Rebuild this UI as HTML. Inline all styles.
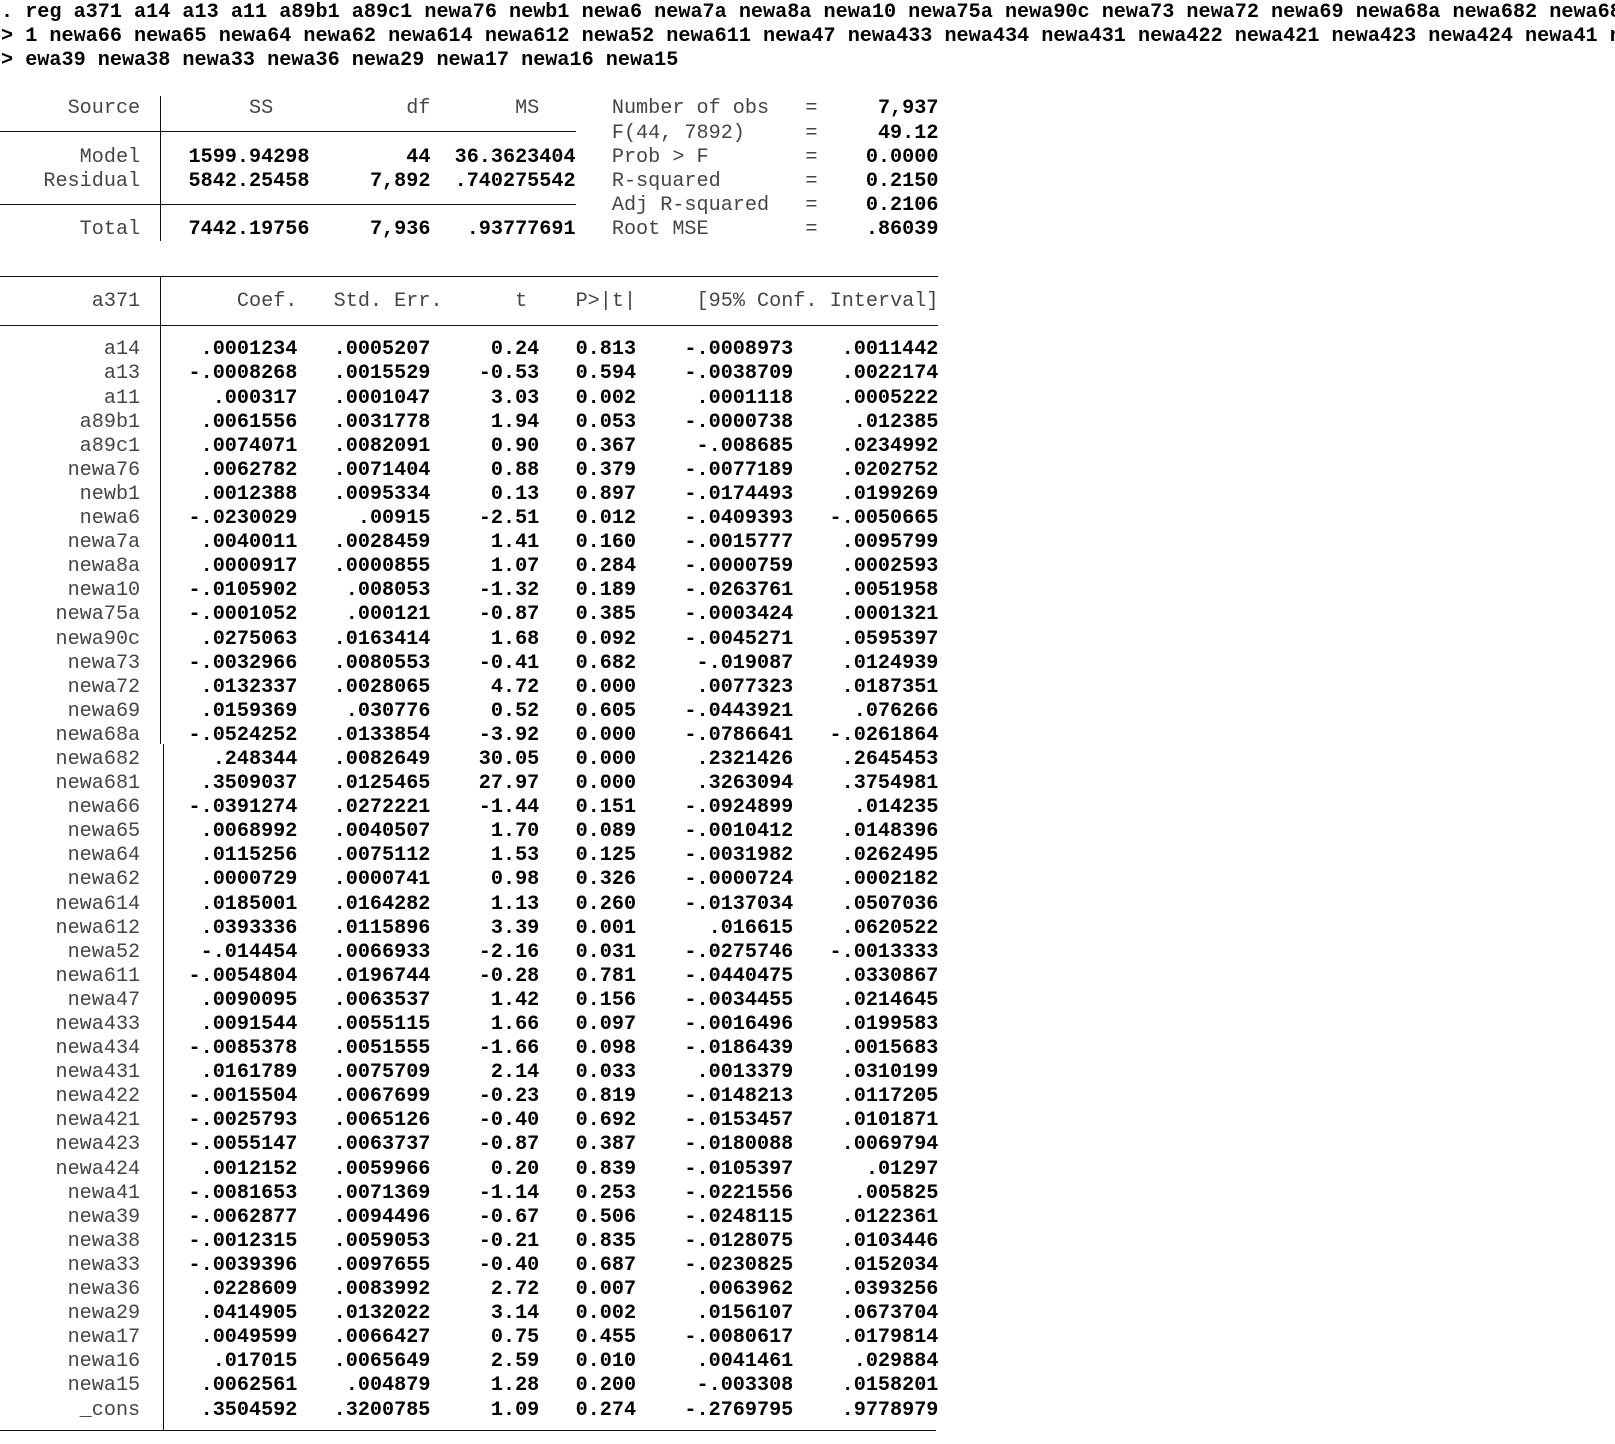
<!DOCTYPE html>
<html><head><meta charset="utf-8">
<style>
html,body{margin:0;padding:0;background:#fff;width:1615px;height:1444px;overflow:hidden;}
body{position:relative;font-family:"Liberation Mono",monospace;font-size:20.17px;color:#111;}
#clip{position:absolute;left:0;top:0;width:1615px;height:1444px;overflow:hidden;}
.ln{position:absolute;left:0;height:24.1px;line-height:24.1px;white-space:pre;}
.cmd{font-weight:bold;color:#000;left:1px;}
.t{left:-5px;}
.t span{display:inline-block;white-space:pre;text-align:right;}
.lb{color:#444;}
.b{font-weight:bold;color:#000;}
.n{width:12ch;color:#444}
.g{width:2ch}
.c{width:11ch}.s{width:11ch}.tt{width:9ch}.p{width:8ch}.lo{width:13ch}.hi{width:12ch}
.ss{width:12ch}.df{width:10ch}.ms{width:12ch}
.sp{width:3ch}
.sl{width:16ch;text-align:left!important;color:#444}
.eq{width:1ch;color:#444}
.sv{width:10ch}
.rule{position:absolute;background:#111;}
</style></head><body><div id="clip">
<div class="ln cmd" style="top:1px">. reg a371 a14 a13 a11 a89b1 a89c1 newa76 newb1 newa6 newa7a newa8a newa10 newa75a newa90c newa73 newa72 newa69 newa68a newa682 newa681 newa66</div>
<div class="ln cmd" style="top:25.1px">&gt; 1 newa66 newa65 newa64 newa62 newa614 newa612 newa52 newa611 newa47 newa433 newa434 newa431 newa422 newa421 newa423 newa424 newa41 newa39</div>
<div class="ln cmd" style="top:49.2px">&gt; ewa39 newa38 newa33 newa36 newa29 newa17 newa16 newa15</div>

<div class="ln t" style="top:97.4px"><span class="n">Source</span><span class="g"></span><span class="ss lb">SS   </span><span class="df lb">df</span><span class="ms lb">MS   </span><span class="sp"></span><span class="sl">Number of obs</span><span class="eq">=</span><span class="sv b">7,937</span></div>
<div class="ln t" style="top:121.5px"><span class="n"></span><span class="g"></span><span class="ss"></span><span class="df"></span><span class="ms"></span><span class="sp"></span><span class="sl">F(44, 7892)</span><span class="eq">=</span><span class="sv b">49.12</span></div>
<div class="ln t" style="top:145.6px"><span class="n">Model</span><span class="g"></span><span class="ss b">1599.94298</span><span class="df b">44</span><span class="ms b">36.3623404</span><span class="sp"></span><span class="sl">Prob &gt; F</span><span class="eq">=</span><span class="sv b">0.0000</span></div>
<div class="ln t" style="top:169.7px"><span class="n">Residual</span><span class="g"></span><span class="ss b">5842.25458</span><span class="df b">7,892</span><span class="ms b">.740275542</span><span class="sp"></span><span class="sl">R-squared</span><span class="eq">=</span><span class="sv b">0.2150</span></div>
<div class="ln t" style="top:193.8px"><span class="n"></span><span class="g"></span><span class="ss"></span><span class="df"></span><span class="ms"></span><span class="sp"></span><span class="sl">Adj R-squared</span><span class="eq">=</span><span class="sv b">0.2106</span></div>
<div class="ln t" style="top:217.9px"><span class="n">Total</span><span class="g"></span><span class="ss b">7442.19756</span><span class="df b">7,936</span><span class="ms b">.93777691</span><span class="sp"></span><span class="sl">Root MSE</span><span class="eq">=</span><span class="sv b">.86039</span></div>

<div class="rule" style="left:0;top:131px;width:576px;height:1px"></div>
<div class="rule" style="left:0;top:204px;width:576px;height:1px"></div>
<div class="rule" style="left:160px;top:96px;width:1px;height:145px"></div>

<div class="ln t" style="top:290.2px"><span class="n">a371</span><span class="lb">        Coef.   Std. Err.      t    P&gt;|t|     [95% Conf. Interval]</span></div>
<div class="rule" style="left:0;top:276px;width:938px;height:1px"></div>
<div class="rule" style="left:0;top:325px;width:938px;height:1px"></div>
<div class="rule" style="left:160px;top:276px;width:1px;height:468px"></div>
<div class="rule" style="left:163px;top:744px;width:1px;height:686px"></div>
<div class="rule" style="left:0;top:1430px;width:936px;height:1px"></div>

<div id="rows" style="position:absolute;left:0;top:338.4px">
<div class="ln t" style="position:relative"><span class="n">a14</span><span class="g"></span><span class="c b">.0001234</span><span class="s b">.0005207</span><span class="tt b">0.24</span><span class="p b">0.813</span><span class="lo b">-.0008973</span><span class="hi b">.0011442</span></div>
<div class="ln t" style="position:relative"><span class="n">a13</span><span class="g"></span><span class="c b">-.0008268</span><span class="s b">.0015529</span><span class="tt b">-0.53</span><span class="p b">0.594</span><span class="lo b">-.0038709</span><span class="hi b">.0022174</span></div>
<div class="ln t" style="position:relative"><span class="n">a11</span><span class="g"></span><span class="c b">.000317</span><span class="s b">.0001047</span><span class="tt b">3.03</span><span class="p b">0.002</span><span class="lo b">.0001118</span><span class="hi b">.0005222</span></div>
<div class="ln t" style="position:relative"><span class="n">a89b1</span><span class="g"></span><span class="c b">.0061556</span><span class="s b">.0031778</span><span class="tt b">1.94</span><span class="p b">0.053</span><span class="lo b">-.0000738</span><span class="hi b">.012385</span></div>
<div class="ln t" style="position:relative"><span class="n">a89c1</span><span class="g"></span><span class="c b">.0074071</span><span class="s b">.0082091</span><span class="tt b">0.90</span><span class="p b">0.367</span><span class="lo b">-.008685</span><span class="hi b">.0234992</span></div>
<div class="ln t" style="position:relative"><span class="n">newa76</span><span class="g"></span><span class="c b">.0062782</span><span class="s b">.0071404</span><span class="tt b">0.88</span><span class="p b">0.379</span><span class="lo b">-.0077189</span><span class="hi b">.0202752</span></div>
<div class="ln t" style="position:relative"><span class="n">newb1</span><span class="g"></span><span class="c b">.0012388</span><span class="s b">.0095334</span><span class="tt b">0.13</span><span class="p b">0.897</span><span class="lo b">-.0174493</span><span class="hi b">.0199269</span></div>
<div class="ln t" style="position:relative"><span class="n">newa6</span><span class="g"></span><span class="c b">-.0230029</span><span class="s b">.00915</span><span class="tt b">-2.51</span><span class="p b">0.012</span><span class="lo b">-.0409393</span><span class="hi b">-.0050665</span></div>
<div class="ln t" style="position:relative"><span class="n">newa7a</span><span class="g"></span><span class="c b">.0040011</span><span class="s b">.0028459</span><span class="tt b">1.41</span><span class="p b">0.160</span><span class="lo b">-.0015777</span><span class="hi b">.0095799</span></div>
<div class="ln t" style="position:relative"><span class="n">newa8a</span><span class="g"></span><span class="c b">.0000917</span><span class="s b">.0000855</span><span class="tt b">1.07</span><span class="p b">0.284</span><span class="lo b">-.0000759</span><span class="hi b">.0002593</span></div>
<div class="ln t" style="position:relative"><span class="n">newa10</span><span class="g"></span><span class="c b">-.0105902</span><span class="s b">.008053</span><span class="tt b">-1.32</span><span class="p b">0.189</span><span class="lo b">-.0263761</span><span class="hi b">.0051958</span></div>
<div class="ln t" style="position:relative"><span class="n">newa75a</span><span class="g"></span><span class="c b">-.0001052</span><span class="s b">.000121</span><span class="tt b">-0.87</span><span class="p b">0.385</span><span class="lo b">-.0003424</span><span class="hi b">.0001321</span></div>
<div class="ln t" style="position:relative"><span class="n">newa90c</span><span class="g"></span><span class="c b">.0275063</span><span class="s b">.0163414</span><span class="tt b">1.68</span><span class="p b">0.092</span><span class="lo b">-.0045271</span><span class="hi b">.0595397</span></div>
<div class="ln t" style="position:relative"><span class="n">newa73</span><span class="g"></span><span class="c b">-.0032966</span><span class="s b">.0080553</span><span class="tt b">-0.41</span><span class="p b">0.682</span><span class="lo b">-.019087</span><span class="hi b">.0124939</span></div>
<div class="ln t" style="position:relative"><span class="n">newa72</span><span class="g"></span><span class="c b">.0132337</span><span class="s b">.0028065</span><span class="tt b">4.72</span><span class="p b">0.000</span><span class="lo b">.0077323</span><span class="hi b">.0187351</span></div>
<div class="ln t" style="position:relative"><span class="n">newa69</span><span class="g"></span><span class="c b">.0159369</span><span class="s b">.030776</span><span class="tt b">0.52</span><span class="p b">0.605</span><span class="lo b">-.0443921</span><span class="hi b">.076266</span></div>
<div class="ln t" style="position:relative"><span class="n">newa68a</span><span class="g"></span><span class="c b">-.0524252</span><span class="s b">.0133854</span><span class="tt b">-3.92</span><span class="p b">0.000</span><span class="lo b">-.0786641</span><span class="hi b">-.0261864</span></div>
<div class="ln t" style="position:relative"><span class="n">newa682</span><span class="g"></span><span class="c b">.248344</span><span class="s b">.0082649</span><span class="tt b">30.05</span><span class="p b">0.000</span><span class="lo b">.2321426</span><span class="hi b">.2645453</span></div>
<div class="ln t" style="position:relative"><span class="n">newa681</span><span class="g"></span><span class="c b">.3509037</span><span class="s b">.0125465</span><span class="tt b">27.97</span><span class="p b">0.000</span><span class="lo b">.3263094</span><span class="hi b">.3754981</span></div>
<div class="ln t" style="position:relative"><span class="n">newa66</span><span class="g"></span><span class="c b">-.0391274</span><span class="s b">.0272221</span><span class="tt b">-1.44</span><span class="p b">0.151</span><span class="lo b">-.0924899</span><span class="hi b">.014235</span></div>
<div class="ln t" style="position:relative"><span class="n">newa65</span><span class="g"></span><span class="c b">.0068992</span><span class="s b">.0040507</span><span class="tt b">1.70</span><span class="p b">0.089</span><span class="lo b">-.0010412</span><span class="hi b">.0148396</span></div>
<div class="ln t" style="position:relative"><span class="n">newa64</span><span class="g"></span><span class="c b">.0115256</span><span class="s b">.0075112</span><span class="tt b">1.53</span><span class="p b">0.125</span><span class="lo b">-.0031982</span><span class="hi b">.0262495</span></div>
<div class="ln t" style="position:relative"><span class="n">newa62</span><span class="g"></span><span class="c b">.0000729</span><span class="s b">.0000741</span><span class="tt b">0.98</span><span class="p b">0.326</span><span class="lo b">-.0000724</span><span class="hi b">.0002182</span></div>
<div class="ln t" style="position:relative"><span class="n">newa614</span><span class="g"></span><span class="c b">.0185001</span><span class="s b">.0164282</span><span class="tt b">1.13</span><span class="p b">0.260</span><span class="lo b">-.0137034</span><span class="hi b">.0507036</span></div>
<div class="ln t" style="position:relative"><span class="n">newa612</span><span class="g"></span><span class="c b">.0393336</span><span class="s b">.0115896</span><span class="tt b">3.39</span><span class="p b">0.001</span><span class="lo b">.016615</span><span class="hi b">.0620522</span></div>
<div class="ln t" style="position:relative"><span class="n">newa52</span><span class="g"></span><span class="c b">-.014454</span><span class="s b">.0066933</span><span class="tt b">-2.16</span><span class="p b">0.031</span><span class="lo b">-.0275746</span><span class="hi b">-.0013333</span></div>
<div class="ln t" style="position:relative"><span class="n">newa611</span><span class="g"></span><span class="c b">-.0054804</span><span class="s b">.0196744</span><span class="tt b">-0.28</span><span class="p b">0.781</span><span class="lo b">-.0440475</span><span class="hi b">.0330867</span></div>
<div class="ln t" style="position:relative"><span class="n">newa47</span><span class="g"></span><span class="c b">.0090095</span><span class="s b">.0063537</span><span class="tt b">1.42</span><span class="p b">0.156</span><span class="lo b">-.0034455</span><span class="hi b">.0214645</span></div>
<div class="ln t" style="position:relative"><span class="n">newa433</span><span class="g"></span><span class="c b">.0091544</span><span class="s b">.0055115</span><span class="tt b">1.66</span><span class="p b">0.097</span><span class="lo b">-.0016496</span><span class="hi b">.0199583</span></div>
<div class="ln t" style="position:relative"><span class="n">newa434</span><span class="g"></span><span class="c b">-.0085378</span><span class="s b">.0051555</span><span class="tt b">-1.66</span><span class="p b">0.098</span><span class="lo b">-.0186439</span><span class="hi b">.0015683</span></div>
<div class="ln t" style="position:relative"><span class="n">newa431</span><span class="g"></span><span class="c b">.0161789</span><span class="s b">.0075709</span><span class="tt b">2.14</span><span class="p b">0.033</span><span class="lo b">.0013379</span><span class="hi b">.0310199</span></div>
<div class="ln t" style="position:relative"><span class="n">newa422</span><span class="g"></span><span class="c b">-.0015504</span><span class="s b">.0067699</span><span class="tt b">-0.23</span><span class="p b">0.819</span><span class="lo b">-.0148213</span><span class="hi b">.0117205</span></div>
<div class="ln t" style="position:relative"><span class="n">newa421</span><span class="g"></span><span class="c b">-.0025793</span><span class="s b">.0065126</span><span class="tt b">-0.40</span><span class="p b">0.692</span><span class="lo b">-.0153457</span><span class="hi b">.0101871</span></div>
<div class="ln t" style="position:relative"><span class="n">newa423</span><span class="g"></span><span class="c b">-.0055147</span><span class="s b">.0063737</span><span class="tt b">-0.87</span><span class="p b">0.387</span><span class="lo b">-.0180088</span><span class="hi b">.0069794</span></div>
<div class="ln t" style="position:relative"><span class="n">newa424</span><span class="g"></span><span class="c b">.0012152</span><span class="s b">.0059966</span><span class="tt b">0.20</span><span class="p b">0.839</span><span class="lo b">-.0105397</span><span class="hi b">.01297</span></div>
<div class="ln t" style="position:relative"><span class="n">newa41</span><span class="g"></span><span class="c b">-.0081653</span><span class="s b">.0071369</span><span class="tt b">-1.14</span><span class="p b">0.253</span><span class="lo b">-.0221556</span><span class="hi b">.005825</span></div>
<div class="ln t" style="position:relative"><span class="n">newa39</span><span class="g"></span><span class="c b">-.0062877</span><span class="s b">.0094496</span><span class="tt b">-0.67</span><span class="p b">0.506</span><span class="lo b">-.0248115</span><span class="hi b">.0122361</span></div>
<div class="ln t" style="position:relative"><span class="n">newa38</span><span class="g"></span><span class="c b">-.0012315</span><span class="s b">.0059053</span><span class="tt b">-0.21</span><span class="p b">0.835</span><span class="lo b">-.0128075</span><span class="hi b">.0103446</span></div>
<div class="ln t" style="position:relative"><span class="n">newa33</span><span class="g"></span><span class="c b">-.0039396</span><span class="s b">.0097655</span><span class="tt b">-0.40</span><span class="p b">0.687</span><span class="lo b">-.0230825</span><span class="hi b">.0152034</span></div>
<div class="ln t" style="position:relative"><span class="n">newa36</span><span class="g"></span><span class="c b">.0228609</span><span class="s b">.0083992</span><span class="tt b">2.72</span><span class="p b">0.007</span><span class="lo b">.0063962</span><span class="hi b">.0393256</span></div>
<div class="ln t" style="position:relative"><span class="n">newa29</span><span class="g"></span><span class="c b">.0414905</span><span class="s b">.0132022</span><span class="tt b">3.14</span><span class="p b">0.002</span><span class="lo b">.0156107</span><span class="hi b">.0673704</span></div>
<div class="ln t" style="position:relative"><span class="n">newa17</span><span class="g"></span><span class="c b">.0049599</span><span class="s b">.0066427</span><span class="tt b">0.75</span><span class="p b">0.455</span><span class="lo b">-.0080617</span><span class="hi b">.0179814</span></div>
<div class="ln t" style="position:relative"><span class="n">newa16</span><span class="g"></span><span class="c b">.017015</span><span class="s b">.0065649</span><span class="tt b">2.59</span><span class="p b">0.010</span><span class="lo b">.0041461</span><span class="hi b">.029884</span></div>
<div class="ln t" style="position:relative"><span class="n">newa15</span><span class="g"></span><span class="c b">.0062561</span><span class="s b">.004879</span><span class="tt b">1.28</span><span class="p b">0.200</span><span class="lo b">-.003308</span><span class="hi b">.0158201</span></div>
<div class="ln t" style="position:relative"><span class="n">_cons</span><span class="g"></span><span class="c b">.3504592</span><span class="s b">.3200785</span><span class="tt b">1.09</span><span class="p b">0.274</span><span class="lo b">-.2769795</span><span class="hi b">.9778979</span></div>
</div>
</div></body></html>
